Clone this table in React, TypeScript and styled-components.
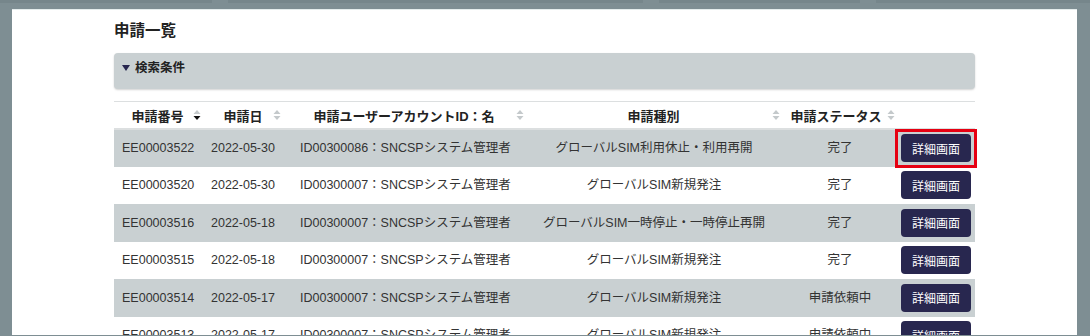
import styled, { createGlobalStyle } from 'styled-components';

const GlobalStyle = createGlobalStyle`
  body {
    margin: 0;
    background: #7e8e93;
    font-family: 'Liberation Sans', 'Noto Sans CJK JP', sans-serif;
    color: #333;
  }
`;

const TopStrip = styled.div`
  display: flex;
  height: 9px;
  column-gap: 16px;
`;

const TopSegment = styled.div<{ w: number }>`
  width: ${({ w }) => w}px;
  height: 3px;
  background: #76868b;
  flex-shrink: 0;
`;

const Panel = styled.main`
  margin: 0 13px 0 12px;
  background: #fff;
  border-top: 1px solid #e4ecec;
  padding: 10px 102px 0;
  height: 326px;
  box-sizing: border-box;
  overflow: hidden;
`;

const Title = styled.h1`
  margin: 0;
  font-size: 15.5px;
  line-height: 22px;
  font-weight: bold;
  color: #222;
`;

const SearchBar = styled.div`
  margin-top: 11px;
  height: 36px;
  box-sizing: border-box;
  background: #c9d0d2;
  border-radius: 4px;
  box-shadow: 0 1px 2px rgba(0, 0, 0, 0.18);
  padding: 6px 8px 0;
  display: flex;
  align-items: flex-start;
  column-gap: 5px;
  font-size: 12.5px;
  line-height: 18px;
  font-weight: bold;
  color: #222;
`;

const Caret = styled.span`
  display: inline-block;
  width: 0;
  height: 0;
  margin-top: 6px;
  border-left: 4px solid transparent;
  border-right: 4px solid transparent;
  border-top: 6px solid #27264f;
`;

const Table = styled.table`
  margin-top: 12px;
  width: 861px;
  table-layout: fixed;
  border-collapse: collapse;
  font-size: 12.5px;
`;

const HeadRow = styled.tr`
  border-top: 1px solid #dcdfe0;
  border-bottom: 2px solid #dcdfe0;
`;

const Th = styled.th<{ pl: number; pr: number }>`
  height: 26px;
  padding: 0 ${({ pr }) => pr}px 0 ${({ pl }) => pl}px;
  font-weight: bold;
  font-size: 13px;
  color: #222;
`;

const ThInner = styled.div`
  display: flex;
  align-items: center;
`;

const ThLabel = styled.span`
  flex: 1;
  text-align: center;
  white-space: nowrap;
`;

const Row = styled.tr<{ shaded: boolean }>`
  height: 37.5px;
  background: ${({ shaded }) => (shaded ? '#c9d0d2' : '#fff')};
`;

const Td = styled.td<{ align?: string; pl?: number; pr?: number }>`
  padding: 0 ${({ pr }) => pr ?? 0}px 0 ${({ pl }) => pl ?? 0}px;
  text-align: ${({ align }) => align ?? 'left'};
  white-space: nowrap;
  color: #333;
  line-height: 18px;
`;

// focused button gets a square red ring drawn over the row
const DetailButton = styled.button<{ focused?: boolean }>`
  position: relative;
  width: 70px;
  height: 28px;
  border: none;
  border-radius: 4px;
  background: #28274f;
  color: #fff;
  font-family: inherit;
  font-size: 12px;
  padding: 0;
  vertical-align: middle;

  &::after {
    content: '';
    display: ${({ focused }) => (focused ? 'block' : 'none')};
    position: absolute;
    top: -5px;
    bottom: -6px;
    left: -6px;
    right: -6px;
    border: 3px solid #e60012;
  }
`;

const SortIcon = ({ active }: { active?: boolean }) => (
  <svg width="8" height="12" viewBox="0 0 8 12" style={{ flexShrink: 0 }}>
    <path d="M0.5 5 L4 1 L7.5 5 Z" fill="#c4c9cb" />
    <path d="M0.5 7 L4 11 L7.5 7 Z" fill={active ? '#111' : '#c4c9cb'} />
  </svg>
);

const columns = [
  { label: '申請番号', w: 91, pl: 8, pr: 4, active: true },
  { label: '申請日', w: 87, pl: 8, pr: 11 },
  { label: '申請ユーザーアカウントID：名', w: 243, pl: 0, pr: 11 },
  { label: '申請種別', w: 250, pl: 0, pr: 5 },
  { label: '申請ステータス', w: 115, pl: 0, pr: 5 },
];

const rows = [
  ['EE00003522', '2022-05-30', 'ID00300086：SNCSPシステム管理者', 'グローバルSIM利用休止・利用再開', '完了'],
  ['EE00003520', '2022-05-30', 'ID00300007：SNCSPシステム管理者', 'グローバルSIM新規発注', '完了'],
  ['EE00003516', '2022-05-18', 'ID00300007：SNCSPシステム管理者', 'グローバルSIM一時停止・一時停止再開', '完了'],
  ['EE00003515', '2022-05-18', 'ID00300007：SNCSPシステム管理者', 'グローバルSIM新規発注', '完了'],
  ['EE00003514', '2022-05-17', 'ID00300007：SNCSPシステム管理者', 'グローバルSIM新規発注', '申請依頼中'],
  ['EE00003513', '2022-05-17', 'ID00300007：SNCSPシステム管理者', 'グローバルSIM新規発注', '申請依頼中'],
];

export default function App() {
  return (
    <>
      <GlobalStyle />
      <TopStrip>
        <TopSegment w={212} />
        <TopSegment w={415} />
        <TopSegment w={201} />
        <TopSegment w={214} />
      </TopStrip>
      <Panel>
        <Title>申請一覧</Title>
        <SearchBar>
          <Caret />
          検索条件
        </SearchBar>
        <Table>
          <colgroup>
            {columns.map(c => (
              <col key={c.label} style={{ width: c.w }} />
            ))}
            <col style={{ width: 75 }} />
          </colgroup>
          <thead>
            <HeadRow>
              {columns.map(c => (
                <Th key={c.label} pl={c.pl} pr={c.pr}>
                  <ThInner>
                    <ThLabel>{c.label}</ThLabel>
                    <SortIcon active={c.active} />
                  </ThInner>
                </Th>
              ))}
              <Th pl={0} pr={0} />
            </HeadRow>
          </thead>
          <tbody>
            {rows.map((r, i) => (
              <Row key={r[0]} shaded={i % 2 === 0}>
                <Td pl={8}>{r[0]}</Td>
                <Td pl={6}>{r[1]}</Td>
                <Td pl={8}>{r[2]}</Td>
                <Td align="center" pr={12}>{r[3]}</Td>
                <Td align="center" pr={5}>{r[4]}</Td>
                <Td align="right" pr={4}>
                  <DetailButton focused={i === 0}>詳細画面</DetailButton>
                </Td>
              </Row>
            ))}
          </tbody>
        </Table>
      </Panel>
    </>
  );
}
